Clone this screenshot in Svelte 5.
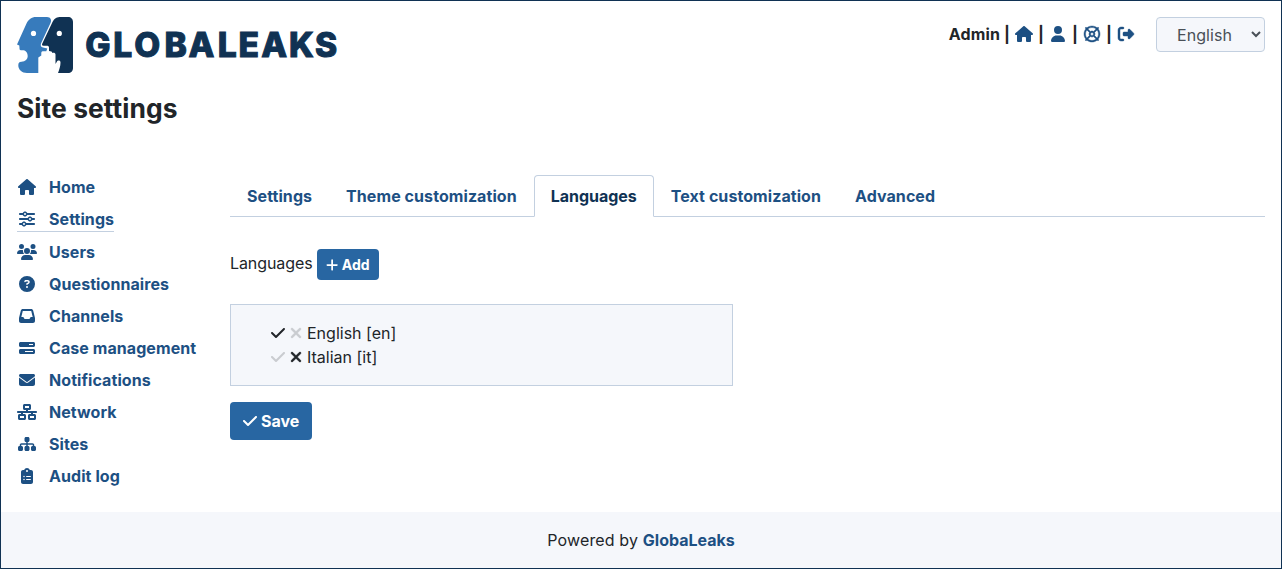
<script>
  const icons = {
    home: [576, 'M575.8 255.5c0 18-15 32.1-32 32.1l-32 0 .7 160.2c0 2.7-.2 5.4-.5 8.1l0 16.2c0 22.1-17.9 40-40 40l-16 0c-1.1 0-2.2 0-3.3-.1c-1.4 .1-2.8 .1-4.2 .1L416 512l-24 0c-22.1 0-40-17.9-40-40l0-24 0-64c0-17.7-14.3-32-32-32l-64 0c-17.7 0-32 14.3-32 32l0 64 0 24c0 22.1-17.9 40-40 40l-24 0-31.9 0c-1.5 0-3-.1-4.5-.2c-1.2 .1-2.4 .2-3.6 .2l-16 0c-22.1 0-40-17.9-40-40l0-112c0-.9 0-1.9 .1-2.8l0-69.7-32 0c-18 0-32-14-32-32.1c0-9 3-17 10-24L266.4 8c7-7 15-8 22-8s15 2 21 7L564.8 231.5c8 7 12 15 11 24z'],
    user: [448, 'M224 256A128 128 0 1 0 224 0a128 128 0 1 0 0 256zm-45.7 48C79.8 304 0 383.8 0 482.3C0 498.7 13.3 512 29.7 512l388.6 0c16.4 0 29.7-13.3 29.7-29.7C448 383.8 368.2 304 269.7 304l-91.4 0z'],
    ring: [512, 'M385.1 419.1C349.7 447.2 304.8 464 256 464s-93.7-16.8-129.1-44.9l80.4-80.4c14.3 8.4 31 13.3 48.8 13.3s34.5-4.8 48.8-13.3l80.4 80.4zm68.1 .2C489.9 374.9 512 318.1 512 256s-22.1-118.9-58.8-163.3L465 81c9.4-9.4 9.4-24.6 0-33.9s-24.6-9.4-33.9 0L419.3 58.8C374.9 22.1 318.1 0 256 0S137.1 22.1 92.7 58.8L81 47c-9.4-9.4-24.6-9.4-33.9 0s-9.4 24.6 0 33.9L58.8 92.7C22.1 137.1 0 193.9 0 256s22.1 118.9 58.8 163.3L47 431c-9.4 9.4-9.4 24.6 0 33.9s24.6 9.4 33.9 0l11.8-11.8C137.1 489.9 193.9 512 256 512s118.9-22.1 163.3-58.8L431 465c9.4 9.4 24.6 9.4 33.9 0s9.4-24.6 0-33.9l-11.8-11.8zm-34.1-34.1l-80.4-80.4c8.4-14.3 13.3-31 13.3-48.8s-4.8-34.5-13.3-48.8l80.4-80.4C447.2 162.3 464 207.2 464 256s-16.8 93.7-44.9 129.1zM385.1 92.9l-80.4 80.4c-14.3-8.4-31-13.3-48.8-13.3s-34.5 4.8-48.8 13.3L126.9 92.9C162.3 64.8 207.2 48 256 48s93.7 16.8 129.1 44.9zM173.3 304.8L92.9 385.1C64.8 349.7 48 304.8 48 256s16.8-93.7 44.9-129.1l80.4 80.4c-8.4 14.3-13.3 31-13.3 48.8s4.8 34.5 13.3 48.8zM208 256a48 48 0 1 1 96 0 48 48 0 1 1 -96 0z'],
    exit: [512, 'M377.9 105.9L500.7 228.7c7.2 7.2 11.3 17.1 11.3 27.3s-4.1 20.1-11.3 27.3L377.9 406.1c-6.4 6.4-15 9.9-24 9.9c-18.7 0-33.9-15.2-33.9-33.9l0-62.1-128 0c-17.7 0-32-14.3-32-32l0-64c0-17.7 14.3-32 32-32l128 0 0-62.1c0-18.7 15.2-33.9 33.9-33.9c9 0 17.6 3.6 24 9.9zM160 96L96 96c-17.7 0-32 14.3-32 32l0 256c0 17.7 14.3 32 32 32l64 0c17.7 0 32 14.3 32 32s-14.3 32-32 32l-64 0c-53 0-96-43-96-96L0 128C0 75 43 32 96 32l64 0c17.7 0 32 14.3 32 32s-14.3 32-32 32z'],
    sliders: [512, 'M0 416c0 17.7 14.3 32 32 32l54.7 0c12.3 28.3 40.5 48 73.3 48s61-19.7 73.3-48L480 448c17.7 0 32-14.3 32-32s-14.3-32-32-32l-246.7 0c-12.3-28.3-40.5-48-73.3-48s-61 19.7-73.3 48L32 384c-17.7 0-32 14.3-32 32zm128 0a32 32 0 1 1 64 0 32 32 0 1 1 -64 0zM320 256a32 32 0 1 1 64 0 32 32 0 1 1 -64 0zm32-80c-32.8 0-61 19.7-73.3 48L32 224c-17.7 0-32 14.3-32 32s14.3 32 32 32l246.7 0c12.3 28.3 40.5 48 73.3 48s61-19.7 73.3-48l54.7 0c17.7 0 32-14.3 32-32s-14.3-32-32-32l-54.7 0c-12.3-28.3-40.5-48-73.3-48zM192 128a32 32 0 1 1 0-64 32 32 0 1 1 0 64zm73.3-64C253 35.7 224.8 16 192 16s-61 19.7-73.3 48L32 64C14.3 64 0 78.3 0 96s14.3 32 32 32l86.7 0c12.3 28.3 40.5 48 73.3 48s61-19.7 73.3-48L480 128c17.7 0 32-14.3 32-32s-14.3-32-32-32L265.3 64z'],
    users: [640, 'M144 0a80 80 0 1 1 0 160A80 80 0 1 1 144 0zM512 0a80 80 0 1 1 0 160A80 80 0 1 1 512 0zM0 298.7C0 239.8 47.8 192 106.7 192l42.7 0c15.9 0 31 3.5 44.6 9.7c-1.3 7.2-1.9 14.7-1.9 22.3c0 38.2 16.8 72.5 43.3 96c-.2 0-.4 0-.7 0L21.3 320C9.6 320 0 310.4 0 298.7zM405.3 320c-.2 0-.4 0-.7 0c26.6-23.5 43.3-57.8 43.3-96c0-7.6-.7-15-1.9-22.3c13.6-6.3 28.7-9.7 44.6-9.7l42.7 0C592.2 192 640 239.8 640 298.7c0 11.8-9.6 21.3-21.3 21.3l-213.3 0zM224 224a96 96 0 1 1 192 0 96 96 0 1 1 -192 0zM128 485.3C128 411.7 187.7 352 261.3 352l117.3 0C452.3 352 512 411.7 512 485.3c0 14.7-11.9 26.7-26.7 26.7l-330.7 0c-14.7 0-26.7-11.9-26.7-26.7z'],
    question: [512, 'M256 512A256 256 0 1 0 256 0a256 256 0 1 0 0 512zM169.8 165.3c7.9-22.3 29.1-37.3 52.8-37.3l58.3 0c34.9 0 63.1 28.3 63.1 63.1c0 22.6-12.1 43.5-31.7 54.8L280 264.4c-.2 13-10.9 23.6-24 23.6c-13.3 0-24-10.7-24-24l0-13.5c0-8.6 4.6-16.5 12.1-20.8l44.3-25.4c4.7-2.7 7.6-7.7 7.6-13.1c0-8.4-6.8-15.1-15.1-15.1l-58.3 0c-3.4 0-6.4 2.1-7.5 5.3l-.4 1.2c-4.4 12.5-18.2 19-30.6 14.6s-19-18.2-14.6-30.6l.4-1.2zM224 352a32 32 0 1 1 64 0 32 32 0 1 1 -64 0z'],
    inbox: [512, 'M121 32C91.6 32 66 52 58.9 80.5L1.9 308.4C.6 313.5 0 318.7 0 323.9L0 416c0 35.3 28.7 64 64 64l384 0c35.3 0 64-28.7 64-64l0-92.1c0-5.2-.6-10.4-1.9-15.5l-57-227.9C446 52 420.4 32 391 32L121 32zm0 64l270 0 48 192-51.2 0c-12.1 0-23.2 6.8-28.6 17.7l-14.3 28.6c-5.4 10.8-16.5 17.7-28.6 17.7l-120.4 0c-12.1 0-23.2-6.8-28.6-17.7l-14.3-28.6c-5.4-10.8-16.5-17.7-28.6-17.7L73 288 121 96z'],
    bars: [512, 'M448 160l-128 0 0-32 128 0 0 32zM48 64C21.5 64 0 85.5 0 112l0 64c0 26.5 21.5 48 48 48l416 0c26.5 0 48-21.5 48-48l0-64c0-26.5-21.5-48-48-48L48 64zM448 352l0 32-256 0 0-32 256 0zM48 288c-26.5 0-48 21.5-48 48l0 64c0 26.5 21.5 48 48 48l416 0c26.5 0 48-21.5 48-48l0-64c0-26.5-21.5-48-48-48L48 288z'],
    envelope: [512, 'M48 64C21.5 64 0 85.5 0 112c0 15.1 7.1 29.3 19.2 38.4L236.8 313.6c11.4 8.5 27 8.5 38.4 0L492.8 150.4c12.1-9.1 19.2-23.3 19.2-38.4c0-26.5-21.5-48-48-48L48 64zM0 176L0 384c0 35.3 28.7 64 64 64l384 0c35.3 0 64-28.7 64-64l0-208L294.4 339.2c-22.8 17.1-54 17.1-76.8 0L0 176z'],
    network: [640, 'M256 64l128 0 0 64-128 0 0-64zM240 0c-26.5 0-48 21.5-48 48l0 96c0 26.5 21.5 48 48 48l48 0 0 32L32 224c-17.7 0-32 14.3-32 32s14.3 32 32 32l96 0 0 32-48 0c-26.5 0-48 21.5-48 48l0 96c0 26.5 21.5 48 48 48l160 0c26.5 0 48-21.5 48-48l0-96c0-26.5-21.5-48-48-48l-48 0 0-32 256 0 0 32-48 0c-26.5 0-48 21.5-48 48l0 96c0 26.5 21.5 48 48 48l160 0c26.5 0 48-21.5 48-48l0-96c0-26.5-21.5-48-48-48l-48 0 0-32 96 0c17.7 0 32-14.3 32-32s-14.3-32-32-32l-256 0 0-32 48 0c26.5 0 48-21.5 48-48l0-96c0-26.5-21.5-48-48-48L240 0zM96 448l0-64 128 0 0 64L96 448zm320-64l128 0 0 64-128 0 0-64z'],
    sitemap: [576, 'M208 80c0-26.5 21.5-48 48-48l64 0c26.5 0 48 21.5 48 48l0 64c0 26.5-21.5 48-48 48l-8 0 0 40 152 0c30.9 0 56 25.1 56 56l0 32 8 0c26.5 0 48 21.5 48 48l0 64c0 26.5-21.5 48-48 48l-64 0c-26.5 0-48-21.5-48-48l0-64c0-26.5 21.5-48 48-48l8 0 0-32c0-4.4-3.6-8-8-8l-152 0 0 40 8 0c26.5 0 48 21.5 48 48l0 64c0 26.5-21.5 48-48 48l-64 0c-26.5 0-48-21.5-48-48l0-64c0-26.5 21.5-48 48-48l8 0 0-40-152 0c-4.4 0-8 3.6-8 8l0 32 8 0c26.5 0 48 21.5 48 48l0 64c0 26.5-21.5 48-48 48l-64 0c-26.5 0-48-21.5-48-48l0-64c0-26.5 21.5-48 48-48l8 0 0-32c0-30.9 25.1-56 56-56l152 0 0-40-8 0c-26.5 0-48-21.5-48-48l0-64z'],
    clipboard: [384, 'M192 0c-41.8 0-77.4 26.7-90.5 64L64 64C28.7 64 0 92.7 0 128L0 448c0 35.3 28.7 64 64 64l256 0c35.3 0 64-28.7 64-64l0-320c0-35.3-28.7-64-64-64l-37.5 0C269.4 26.7 233.8 0 192 0zm0 64a32 32 0 1 1 0 64 32 32 0 1 1 0-64zM72 272a24 24 0 1 1 48 0 24 24 0 1 1 -48 0zm104-16l128 0c8.8 0 16 7.2 16 16s-7.2 16-16 16l-128 0c-8.8 0-16-7.2-16-16s7.2-16 16-16zM72 368a24 24 0 1 1 48 0 24 24 0 1 1 -48 0zm88 0c0-8.8 7.2-16 16-16l128 0c8.8 0 16 7.2 16 16s-7.2 16-16 16l-128 0c-8.8 0-16-7.2-16-16z'],
    check: [448, 'M438.6 105.4c12.5 12.5 12.5 32.8 0 45.3l-256 256c-12.5 12.5-32.8 12.5-45.3 0l-128-128c-12.5-12.5-12.5-32.8 0-45.3s32.8-12.5 45.3 0L160 338.7 393.4 105.4c12.5-12.5 32.8-12.5 45.3 0z'],
    xmark: [384, 'M342.6 150.6c12.5-12.5 12.5-32.8 0-45.3s-32.8-12.5-45.3 0L192 210.7 86.6 105.4c-12.5-12.5-32.8-12.5-45.3 0s-12.5 32.8 0 45.3L146.7 256 41.4 361.4c-12.5 12.5-12.5 32.8 0 45.3s32.8 12.5 45.3 0L192 301.3 297.4 406.6c12.5 12.5 32.8 12.5 45.3 0s12.5-32.8 0-45.3L237.3 256 342.6 150.6z'],
    plus: [448, 'M256 80c0-17.7-14.3-32-32-32s-32 14.3-32 32l0 144L48 224c-17.7 0-32 14.3-32 32s14.3 32 32 32l144 0 0 144c0 17.7 14.3 32 32 32s32-14.3 32-32l0-144 144 0c17.7 0 32-14.3 32-32s-14.3-32-32-32l-144 0 0-144z'],
  };

  const menu = [
    ['home', 'Home'],
    ['sliders', 'Settings'],
    ['users', 'Users'],
    ['question', 'Questionnaires'],
    ['inbox', 'Channels'],
    ['bars', 'Case management'],
    ['envelope', 'Notifications'],
    ['network', 'Network'],
    ['sitemap', 'Sites'],
    ['clipboard', 'Audit log'],
  ];
  const tabs = ['Settings', 'Theme customization', 'Languages', 'Text customization', 'Advanced'];
  const languages = [
    { label: 'English [en]', enabled: true },
    { label: 'Italian [it]', enabled: false },
  ];
  const session = ['home', 'user', 'ring', 'exit'];
</script>

{#snippet icon(name, fixed = false, dim = false)}
  <svg class="icon {name}" class:fixed class:dim style:width={fixed ? null : `${icons[name][0] / 512}em`} viewBox="0 0 {icons[name][0]} 512" aria-hidden="true">
    <path fill-rule="evenodd" d={icons[name][1]} />
  </svg>
{/snippet}

<div class="page">
  <header>
    <svg class="logo" viewBox="0 0 320 56" width="320" height="56">
      <path fill="#377bbc" d="M19 0H30C33.500 0 35 3 33.500 6L24 26.500C23.300 28.500 24 30.300 26 30.500L30.300 31.500L29.300 34.300H25.500C24 34.500 24.300 36 24.300 38.500L21.300 40.500V56H10C5 56 1.300 52.500 1.300 48.500C1.300 46 2 45 4.500 44.800C8.500 44.500 10.700 42 10.700 39C10.700 35 8 33 5 33.300C3 33.300 2.300 32.700 2.500 31.300L2.300 28.500L0 27.500L9.500 6.500C11.500 2.500 14.500 0 19 0Z" />
      <path fill="#103253" d="M44 0H51C54 0 56 2 56 5V51C56 54 54 56 51 56H41C42.300 52.500 43.500 49 43.500 45.500C43.500 43 40.500 43 39.700 45L38.500 47V37.500C38.500 35.700 36.500 35.500 35.500 36L34.500 34.500L32 34V30.500C32 29 30.500 28.700 29 28.800H26.500C25 28.800 24.700 27.800 25.300 26.500L35.500 5C37.500 1 40 0 44 0Z" />
      <circle cx="16.500" cy="16.400" r="2.600" fill="#fff" />
      <circle cx="42.300" cy="16.400" r="2.600" fill="#fff" />
      <text x="68.300 96.300 117.200 147.500 171.500 200.700 221.500 244.200 272 298" y="39.700">GLOBALEAKS</text>
    </svg>
    <div class="session">
      <span class="who">Admin</span>
      {#each session as name}
        <span class="bar">|</span><a href="#{name}" aria-label={name}>{@render icon(name, true)}</a>
      {/each}
      <select aria-label="Language"><option>English</option></select>
    </div>
  </header>

  <h1>Site settings</h1>

  <div class="columns">
    <nav class="menu">
      {#each menu as [name, label]}
        <a href="#{name}" class:current={name === 'sliders'}>{@render icon(name, true)}<span>{label}</span></a>
      {/each}
    </nav>
    <main>
      <div class="tabs">
        {#each tabs as tab}
          <a href="#{tab}" class:active={tab === 'Languages'}>{tab}</a>
        {/each}
      </div>
      <div class="heading">
        <span>Languages</span>
        <button class="small">{@render icon('plus')}<span>Add</span></button>
      </div>
      <ul>
        {#each languages as { label, enabled }}
          <li>
            {@render icon('check', false, !enabled)}
            {@render icon('xmark', false, enabled)}
            <span>{label}</span>
          </li>
        {/each}
      </ul>
      <button class="save">{@render icon('check')}<span>Save</span></button>
    </main>
  </div>

  <footer><span>Powered by&nbsp;</span><a href="#globaleaks">GlobaLeaks</a></footer>
</div>

<style>
  :global(body) {
    margin: 0;
  }
  .page {
    box-sizing: border-box;
    height: 569px;
    display: flex;
    flex-direction: column;
    border: 1px solid #103253;
    background: #fff;
    color: #212529;
    font: 16px/24px Inter, sans-serif;
  }
  a {
    color: #1d5083;
    font-weight: 700;
    letter-spacing: 0.07px;
    text-decoration: none;
  }
  .icon {
    height: 1em;
    flex: none;
    fill: currentColor;
    overflow: visible;
  }
  .icon.fixed {
    width: 20px;
  }
  .icon.dim {
    opacity: 0.2;
  }
  .icon.ring,
  .icon.exit,
  .icon.xmark {
    stroke: currentColor;
    stroke-width: 14px;
  }
  header {
    display: flex;
    justify-content: space-between;
    align-items: flex-start;
    height: 56px;
    padding: 16px 16px 0;
  }
  .logo {
    overflow: visible;
  }
  .logo text {
    font: 800 33.600px Inter, sans-serif;
    fill: #103253;
    stroke: #103253;
    stroke-width: 1px;
  }
  .session {
    display: flex;
    align-items: center;
    height: 35px;
    font-weight: 700;
  }
  .session a {
    display: flex;
  }
  .session .who,
  .session .bar,
  .session a {
    margin-bottom: 2px;
  }
  .who {
    letter-spacing: 0.15px;
  }
  .bar {
    width: 14px;
    text-align: center;
  }
  select {
    box-sizing: border-box;
    width: 109px;
    height: 35px;
    margin-left: 20px;
    padding: 0 0 0 16px;
    border: 1px solid #c3d0e0;
    border-radius: 4px;
    background: #f5f7fb;
    color: #495057;
    font: 16px/24px Inter, sans-serif;
    letter-spacing: 0.05px;
  }
  h1 {
    margin: 19px 16px 0;
    color: #212529;
    font-size: 26.400px;
    line-height: 32px;
    font-weight: 700;
    letter-spacing: 0.07px;
  }
  .columns {
    display: flex;
    flex: 1;
    padding: 51px 16px 0;
  }
  .menu {
    width: 213px;
    display: flex;
    flex-direction: column;
    align-items: flex-start;
    gap: 8px;
  }
  .menu a {
    display: flex;
    align-items: center;
    gap: 12px;
  }
  .menu .current {
    border-bottom: 1px solid #c3d0e0;
  }
  main {
    flex: 1;
  }
  .tabs {
    display: flex;
    height: 41px;
    border-bottom: 1px solid #c3d0e0;
  }
  .tabs a {
    height: 24px;
    padding: 8px 16px;
    border: 1px solid transparent;
    border-radius: 4px 4px 0 0;
  }
  .tabs .active {
    border-color: #c3d0e0;
    border-bottom-color: #fff;
    background: #fff;
    color: #103253;
    letter-spacing: -0.03px;
  }
  .heading {
    display: flex;
    align-items: center;
    gap: 4px;
    margin-top: 32px;
  }
  .heading > span {
    padding-bottom: 3px;
    letter-spacing: -0.08px;
  }
  button {
    display: flex;
    align-items: center;
    border: 0;
    border-radius: 4px;
    background: #2866a2;
    color: #fff;
    font: 700 16px/24px Inter, sans-serif;
    padding: 7px 13px;
    gap: 4px;
  }
  .small {
    font-size: 14px;
    line-height: 21px;
    padding: 5px 9px;
  }
  ul {
    box-sizing: border-box;
    width: 503px;
    margin: 24px 0 16px;
    padding: 16px 0 16px 40px;
    border: 1px solid #c3d0e0;
    background: #f5f7fb;
    list-style: none;
  }
  li {
    display: flex;
    align-items: center;
    gap: 5px;
  }
  footer {
    display: flex;
    justify-content: center;
    padding: 16px;
    background: #f5f7fb;
  }
  footer span {
    letter-spacing: 0.15px;
  }
  footer a {
    letter-spacing: 0;
  }
</style>
